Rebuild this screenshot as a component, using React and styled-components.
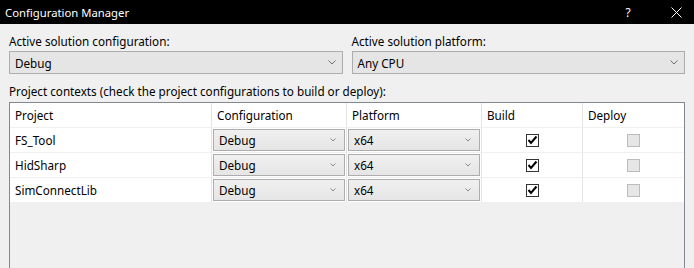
import React from "react";
import styled, { createGlobalStyle } from "styled-components";

const GlobalStyle = createGlobalStyle`
  html, body { margin: 0; padding: 0; background: #f0f0f0; }
  body { font-family: "Noto Sans", "Open Sans", sans-serif; font-size: 11.7px; color: #000; }
`;

const Window = styled.div`
  width: 694px;
  height: 268px;
  overflow: hidden;
  display: flex;
  flex-direction: column;
  background: #f0f0f0;
`;

const TitleBar = styled.div`
  height: 24px;
  flex: none;
  background: #000;
  color: #fff;
  display: flex;
  align-items: center;
  padding-left: 5px;
  font-size: 11.3px;
`;

const Title = styled.div`
  flex: 1;
`;

const TitleButton = styled.div`
  width: 36px;
  height: 24px;
  margin-right: ${(p) => (p.$gap ? 12 : 0)}px;
  display: flex;
  align-items: center;
  justify-content: center;
  color: #fff;
  font-size: 12px;
`;

const Content = styled.div`
  flex: 1;
  display: flex;
  flex-direction: column;
  padding: 9px 9px 0 9px;
  min-height: 0;
`;

const TopGrid = styled.div`
  display: grid;
  grid-template-columns: 1fr 1fr;
  column-gap: 9px;
`;

const Field = styled.div`
  display: flex;
  flex-direction: column;
`;

const Label = styled.div`
  height: 18px;
  line-height: 16px;
`;

const Combo = styled.div`
  box-sizing: border-box;
  height: ${(p) => (p.$small ? 22 : 23)}px;
  border: 1px solid #adadad;
  background: ${(p) => (p.$small ? "linear-gradient(#f0f0f0, #e5e5e5)" : "#e5e5e5")};
  display: flex;
  align-items: center;
  padding: ${(p) => (p.$small ? "0 8px 0 5px" : "0 6px 0 5px")};
  margin: ${(p) => (p.$small ? "0 1px" : "0")};
`;

const ComboText = styled.div`
  flex: 1;
  white-space: nowrap;
`;

const Chevron = ({ small }) =>
  small ? (
    <svg width="6" height="4" viewBox="0 0 6 4">
      <polyline points="0.5,0.5 3,3 5.5,0.5" fill="none" stroke="#8a8a8a" strokeWidth="1" />
    </svg>
  ) : (
    <svg width="8" height="5" viewBox="0 0 8 5">
      <polyline points="0.5,0.5 4,4 7.5,0.5" fill="none" stroke="#707070" strokeWidth="1" />
    </svg>
  );

const SectionLabel = styled.div`
  margin-top: 9px;
  height: 19px;
  line-height: 16px;
`;

const Table = styled.div`
  flex: 1;
  border: 1px solid #828790;
  border-bottom: none;
  background: #f0f0f0;
  display: flex;
  flex-direction: column;
`;

const Row = styled.div`
  display: grid;
  grid-template-columns: 202px 135px 135px 101px 101px;
  height: 25px;
  background: #fff;
  border-bottom: 1px solid #f0f0f0;
  box-sizing: border-box;
`;

const Cell = styled.div`
  display: flex;
  align-items: center;
  justify-content: ${(p) => (p.$center ? "center" : "flex-start")};
  padding-left: ${(p) => (p.$pad ? 5 : 0)}px;
  border-right: ${(p) => (p.$last ? "none" : "1px solid #e3e3e3")};
  box-sizing: border-box;
  white-space: nowrap;
  min-width: 0;
`;

const ComboCell = styled(Cell)`
  & > div {
    flex: 1;
  }
`;

const CheckBox = styled.div`
  width: 13px;
  height: 13px;
  box-sizing: border-box;
  border: 1px solid ${(p) => (p.$disabled ? "#bcbcbc" : "#333")};
  background: ${(p) => (p.$disabled ? "#e6e6e6" : "#fff")};
  display: flex;
  align-items: center;
  justify-content: center;
`;

const Check = () => (
  <svg width="11" height="11" viewBox="0 0 11 11">
    <polyline points="1.5,5 4,8 9.5,1.5" fill="none" stroke="#000" strokeWidth="2" />
  </svg>
);

const projects = ["FS_Tool", "HidSharp", "SimConnectLib"];

export default function App() {
  return (
    <Window>
      <GlobalStyle />
      <TitleBar>
        <Title>Configuration Manager</Title>
        <TitleButton $gap>?</TitleButton>
        <TitleButton>
          <svg width="11" height="11" viewBox="0 0 11 11">
            <path d="M0.5 0.5 L10.5 10.5 M10.5 0.5 L0.5 10.5" stroke="#fff" strokeWidth="1" />
          </svg>
        </TitleButton>
      </TitleBar>
      <Content>
        <TopGrid>
          <Field>
            <Label>Active solution configuration:</Label>
            <Combo>
              <ComboText>Debug</ComboText>
              <Chevron />
            </Combo>
          </Field>
          <Field>
            <Label>Active solution platform:</Label>
            <Combo>
              <ComboText>Any CPU</ComboText>
              <Chevron />
            </Combo>
          </Field>
        </TopGrid>
        <SectionLabel>Project contexts (check the project configurations to build or deploy):</SectionLabel>
        <Table>
          <Row>
            <Cell $pad>Project</Cell>
            <Cell $pad>Configuration</Cell>
            <Cell $pad>Platform</Cell>
            <Cell $pad>Build</Cell>
            <Cell $pad $last>Deploy</Cell>
          </Row>
          {projects.map((p) => (
            <Row key={p}>
              <Cell $pad>{p}</Cell>
              <ComboCell>
                <Combo $small>
                  <ComboText>Debug</ComboText>
                  <Chevron small />
                </Combo>
              </ComboCell>
              <ComboCell>
                <Combo $small>
                  <ComboText>x64</ComboText>
                  <Chevron small />
                </Combo>
              </ComboCell>
              <Cell $center>
                <CheckBox>
                  <Check />
                </CheckBox>
              </Cell>
              <Cell $center $last>
                <CheckBox $disabled />
              </Cell>
            </Row>
          ))}
        </Table>
      </Content>
    </Window>
  );
}
